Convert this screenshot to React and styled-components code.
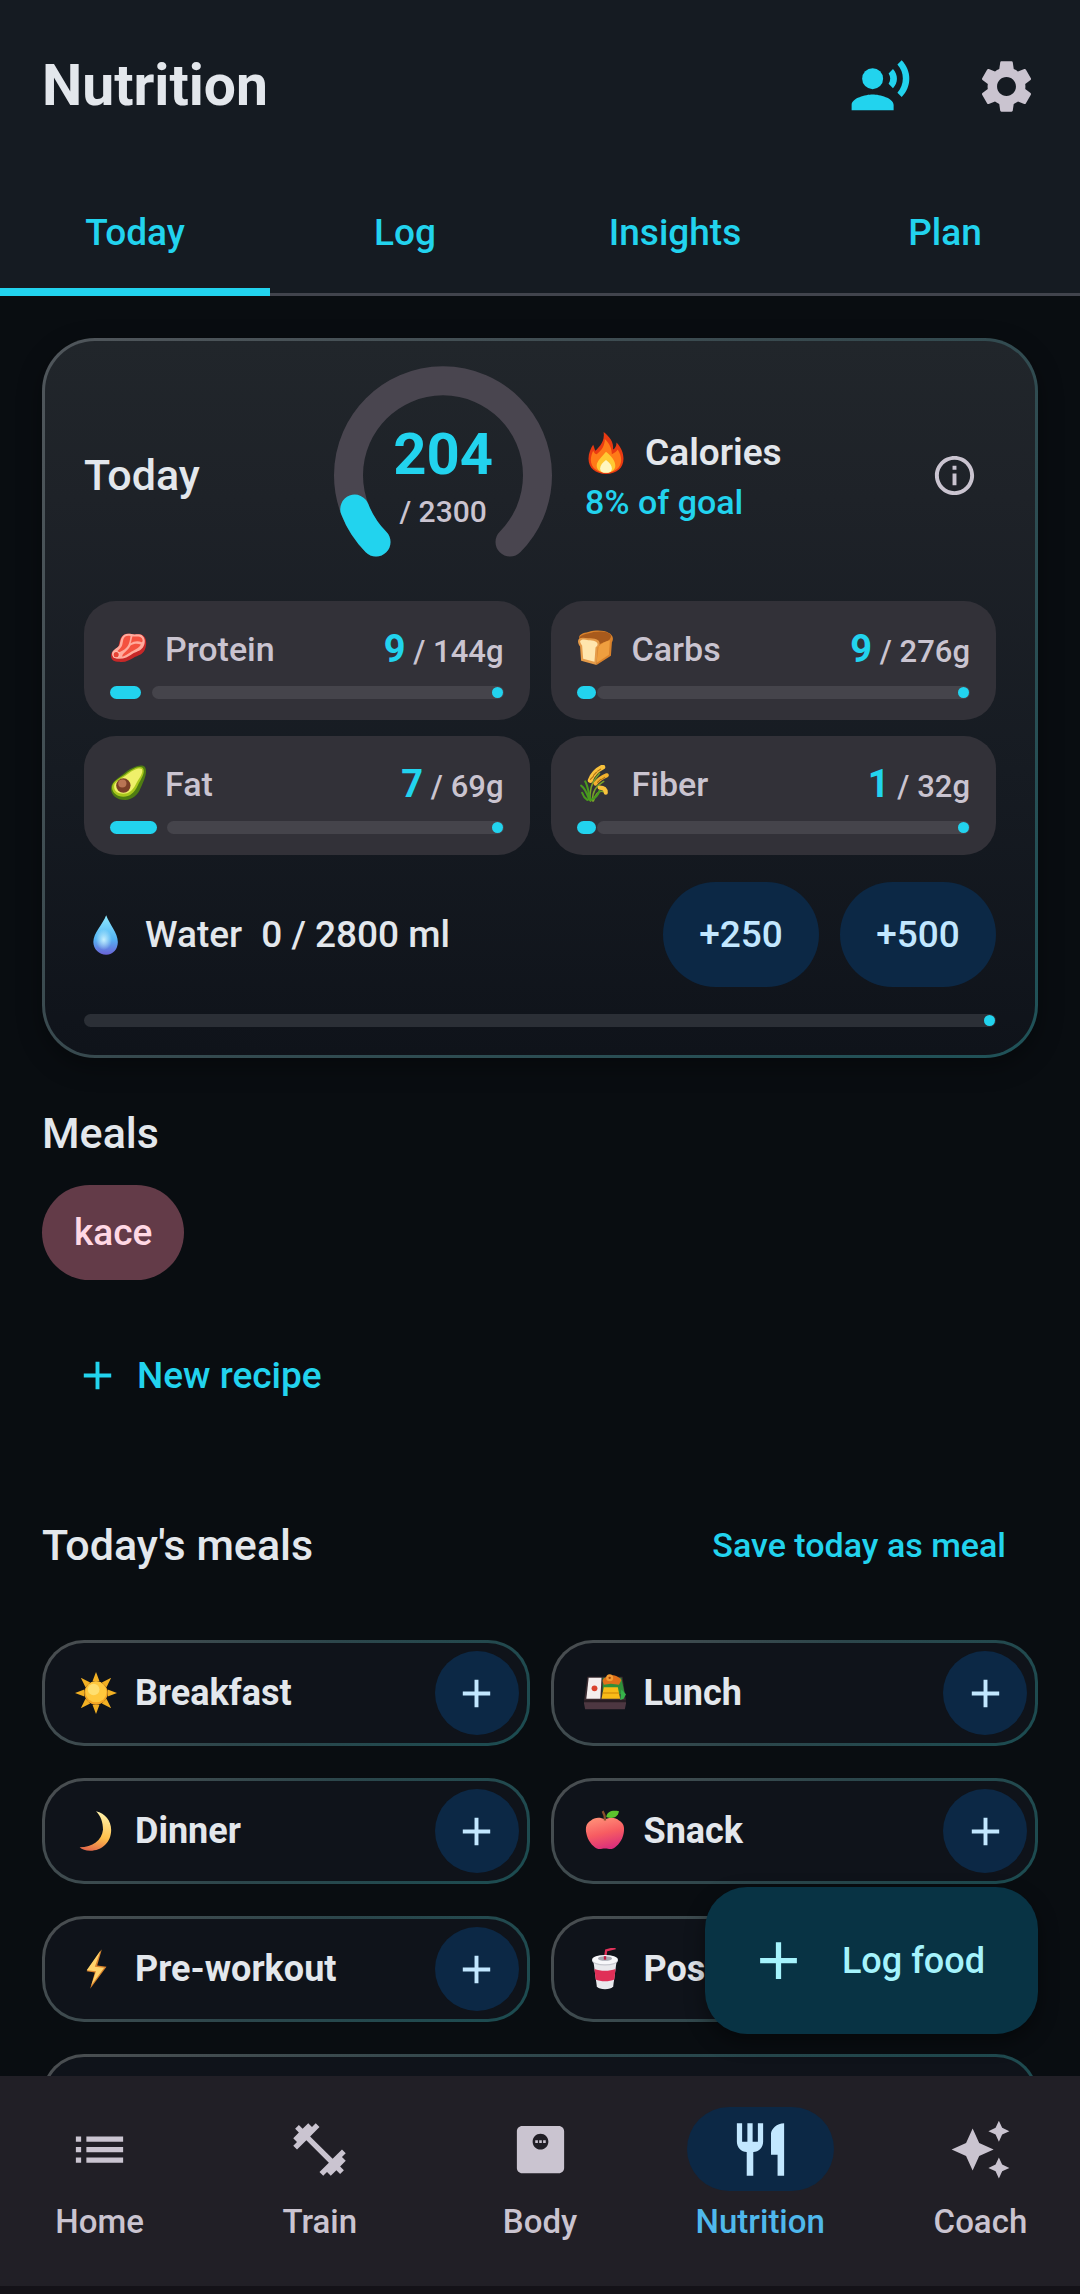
import React, { useState } from "react";
import styled, { createGlobalStyle } from "styled-components";
import {
  MdAdd,
  MdAutoAwesome,
  MdFitnessCenter,
  MdInfoOutline,
  MdList,
  MdMonitorWeight,
  MdRecordVoiceOver,
  MdRestaurant,
  MdSettings,
} from "react-icons/md";

const GlobalStyle = createGlobalStyle`
  * {
    box-sizing: border-box;
  }
  body {
    margin: 0;
    background-color: #090d11;
    color: #e3e7ec;
    font-family: Roboto, "Liberation Sans", sans-serif;
  }
  button {
    border: none;
    margin: 0;
    padding: 0;
    background: none;
    color: inherit;
    font: inherit;
    cursor: pointer;
  }
  svg {
    display: block;
    flex-shrink: 0;
  }
`;

const Screen = styled.div`
  height: 100vh;
  display: flex;
  flex-direction: column;
`;

/* top bar */

const Header = styled.header`
  flex-shrink: 0;
  background-color: #151b22;
`;

const TopBar = styled.div`
  height: 172px;
  padding: 0 11px 0 42px;
  display: flex;
  align-items: center;
`;

const Title = styled.h1`
  flex: 1;
  margin: 0;
  font-size: 57px;
  line-height: 74px;
  font-weight: bold;
`;

const IconButton = styled.button`
  width: ${(props) => props.$size || 126}px;
  height: ${(props) => props.$size || 126}px;
  display: flex;
  align-items: center;
  justify-content: center;
  color: ${(props) => props.$color || "#cac4d0"};
`;

const Tabs = styled.div`
  display: flex;
  height: 124px;
  box-shadow: inset 0 -3px #41444d;
`;

const Tab = styled.button`
  flex: 1;
  padding-bottom: 4px;
  color: #22d3ee;
  font-size: 37px;
  font-weight: 500;
  box-shadow: ${(props) => (props.$active ? "inset 0 -8px #22d3ee" : "none")};
`;

/* content */

const Body = styled.div`
  flex: 1;
  min-height: 0;
  position: relative;
`;

const Content = styled.main`
  height: 100%;
  padding: 42px;
  overflow-y: auto;
  scrollbar-width: none;
  display: flex;
  flex-direction: column;
  gap: 42px;
`;

const SummaryCard = styled.section`
  flex-shrink: 0;
  padding: 24px 39px 28px;
  display: flex;
  flex-direction: column;
  gap: 27px;
  border: 3px solid transparent;
  border-radius: 53px;
  background:
    linear-gradient(#21262b, #1e2228 22%, #161b22 60%, #0f131a) padding-box,
    linear-gradient(135deg, #50565b, #37494e 45%, #1f5258) border-box;
  box-shadow: 0 8px 24px rgba(0, 0, 0, 0.35);
`;

const SummaryTop = styled.div`
  display: grid;
  grid-template-columns: 9fr 220px 16fr;
  align-items: center;
  margin-bottom: -11px;
`;

const Heading = styled.h2`
  margin: 0;
  font-size: 43px;
  line-height: 66px;
  font-weight: 500;
`;

const Gauge = styled.div`
  display: grid;
  place-items: center;

  > * {
    grid-area: 1 / 1;
  }
`;

const GaugeText = styled.div`
  display: flex;
  flex-direction: column;
  align-items: center;
`;

const GaugeValue = styled.strong`
  color: #22d3ee;
  font-size: 58px;
  line-height: 74px;
`;

const GaugeGoal = styled.span`
  color: #cac4d0;
  font-size: 30px;
  line-height: 42px;
  font-weight: 500;
`;

const CaloriesSide = styled.div`
  padding-left: 32px;
  display: flex;
  align-items: center;
  justify-content: space-between;
`;

const CaloriesTitle = styled.div`
  display: flex;
  align-items: center;
  gap: 18px;
  font-size: 37px;
  line-height: 54px;
  font-weight: 600;
`;

const Percent = styled.div`
  color: #22d3ee;
  font-size: 34px;
  line-height: 44px;
  font-weight: 500;
`;

const Macros = styled.div`
  display: grid;
  grid-template-columns: 1fr 1fr;
  gap: 16px 21px;
`;

const MacroTile = styled.div`
  padding: 21px 26px;
  display: flex;
  flex-direction: column;
  gap: 11px;
  border-radius: 32px;
  background-color: #323138;
`;

const MacroRow = styled.div`
  height: 53px;
  display: flex;
  align-items: center;
  color: #cac4d0;
`;

const MacroName = styled.span`
  flex: 1;
  padding-left: 18px;
  font-size: 34px;
  font-weight: 500;
`;

const MacroValue = styled.span`
  font-size: 31px;
  font-weight: 500;

  strong {
    color: #22d3ee;
    font-size: 38px;
  }
`;

const Bar = styled.div`
  height: 13px;
  display: flex;
  gap: ${(props) => props.$gap}px;
`;

const BarFill = styled.div`
  border-radius: 7px;
  background-color: #22d3ee;
`;

const BarTrack = styled.div`
  flex: 1;
  padding: 1px;
  display: flex;
  justify-content: flex-end;
  border-radius: 7px;
  background-color: ${(props) => props.$color || "#45444b"};

  &::after {
    content: "";
    width: 11px;
    height: 11px;
    border-radius: 50%;
    background-color: #22d3ee;
  }
`;

const WaterRow = styled.div`
  display: flex;
  align-items: center;
  gap: 19px;
  font-size: 37px;
  font-weight: 500;
`;

const WaterAmount = styled.span`
  flex: 1;
`;

const WaterButtons = styled.div`
  display: flex;
  gap: 21px;
`;

const WaterButton = styled.button`
  width: 156px;
  height: 105px;
  border-radius: 53px;
  background-color: #0c2845;
  color: #c2e7ff;
`;

const Section = styled.section`
  flex-shrink: 0;
  display: flex;
  flex-direction: column;
  align-items: flex-start;
`;

const Chip = styled.button`
  height: 95px;
  margin: 19px 0 32px;
  padding: 0 32px;
  border-radius: 48px;
  background-color: #633b48;
  color: #ffd8e4;
  font-size: 37px;
  font-weight: 500;
`;

const TextButton = styled.button`
  height: 127px;
  padding: 0 32px;
  display: flex;
  align-items: center;
  gap: 16px;
  color: #22d3ee;
  font-size: ${(props) => (props.$small ? 34 : 37)}px;
  font-weight: 500;
`;

const SectionHead = styled.div`
  width: 100%;
  margin-bottom: 32px;
  display: flex;
  align-items: center;
  justify-content: space-between;
`;

const MealGrid = styled.div`
  width: 100%;
  display: grid;
  grid-template-columns: 1fr 1fr;
  gap: 32px 21px;
`;

const MealCard = styled.div`
  height: 106px;
  grid-column: ${(props) => (props.$wide ? "1 / -1" : "auto")};
  padding: 0 8px 0 30px;
  display: flex;
  align-items: center;
  gap: 18px;
  border: 3px solid transparent;
  border-radius: 42px;
  background:
    linear-gradient(#0f131a, #0f131a) padding-box,
    linear-gradient(135deg, #4b4e51, #2c464b 50%, #1b4c51) border-box;
`;

const MealName = styled.span`
  flex: 1;
  font-size: 36px;
  font-weight: bold;
`;

const AddButton = styled(IconButton)`
  border-radius: 50%;
  background-color: #0c2845;
`;

const LogFood = styled.button`
  position: absolute;
  right: 42px;
  bottom: 42px;
  height: 147px;
  padding: 0 53px 0 42px;
  display: flex;
  align-items: center;
  gap: 32px;
  border-radius: 42px;
  background-color: #083344;
  color: #a5f3fc;
  font-size: 36px;
  font-weight: 500;
  box-shadow: 0 8px 20px rgba(0, 0, 0, 0.4);
`;

/* bottom navigation */

const BottomNav = styled.nav`
  flex-shrink: 0;
  height: 218px;
  padding-top: 31px;
  display: flex;
  gap: 21px;
  background-color: #211f26;
  border-bottom: 8px solid #141218;
`;

const NavItem = styled.a`
  flex: 1;
  display: flex;
  flex-direction: column;
  align-items: center;
  gap: 10px;
  color: ${(props) => (props.$active ? "#4fb8ec" : "#cac4d0")};
  font-size: 33px;
  line-height: 42px;
  font-weight: 500;
  text-decoration: none;
`;

const NavIcon = styled.span`
  width: 147px;
  height: 84px;
  display: flex;
  align-items: center;
  justify-content: center;
  border-radius: 42px;
  background-color: ${(props) => (props.$active ? "#0c2845" : "transparent")};
  color: ${(props) => (props.$active ? "#c2e7ff" : "#cac4d0")};
`;

/* food drawings, all on a 36 unit grid */

const drawings = {
  fire: (
    <>
      <path d="M16 0c5 4 9 9 8 15 2-1 3-3 3-6 4 4 6 9 6 14 0 8-6 13-15 13S3 31 3 23c0-5 2-9 4-12 1 2 1 4 2 5 4-4 8-8 7-16z" fill="#e93a12" />
      <path d="M17 6c4 4 6 8 6 13 2-1 4-2 5-4 2 3 3 6 3 9 0 6-5 11-13 11S5 30 5 24c0-3 1-6 2-8 1 2 2 3 3 3 4-3 7-7 7-13z" fill="#ff7a18" />
      <path d="M18 17c5 4 8 8 8 12 0 4-4 6-8 6s-8-2-8-6c0-4 4-7 8-12z" fill="#ffc933" />
      <path d="M18 24c3 2 5 5 5 7 0 3-2 4-5 4s-5-1-5-4c0-2 2-5 5-7z" fill="#fff6bf" />
    </>
  ),
  protein: (
    <>
      <path d="M10 9c2-5 6-6 11-5 4 1 8-1 12 2 3 3 3 10 0 15-3 4-7 4-10 6-4 2-8 5-14 4-5 0-8-2-8-6 0-5 5-6 7-9 1-2 1-5 2-7z" fill="#c62828" />
      <path d="M11 8c2-4 5-5 10-4 4 1 8-1 11 2 3 3 2 8 0 11-3 4-7 4-10 6-4 3-8 5-13 5-4 0-7-2-7-5 0-4 5-5 7-8 1-2 1-5 2-7z" fill="#ffab9d" />
      <path d="M13 9c1-3 4-4 7-3-1 5-1 9-6 13-3 2-5 3-8 3 2-3 5-4 6-8zM22 6c3 1 6-1 9 2 1 2 1 3 0 4-4-2-8-1-11 1 1-2 1-5 2-7zM20 15c3-2 7-2 10-1-2 4-6 5-9 7-3 2-6 4-9 5-1-3 6-6 8-11z" fill="#f4513f" />
      <circle cx="6" cy="24" r="3" fill="#e84335" stroke="#ffc0b3" strokeWidth="1" />
    </>
  ),
  carbs: (
    <>
      <path d="M2 8c0-4 4-5 9-6 7-2 15-2 20 1 4 2 5 6 3 9l-1 13-14 9-1-19z" fill="#d9822b" />
      <path d="M2 8c2-4 8-4 14-6 7-1 13-1 16 2 2 2 1 4-1 6l-10 4z" fill="#a85a1c" />
      <path d="M21 16c3-3 7-5 11-6l-1 14-12 8z" fill="#ef9f3f" />
      <path d="M1 11c0-4 4-4 10-3 6 0 11 1 11 5 0 2-1 3-2 4l-1 17L4 30 3 16c-1-1-2-3-2-5z" fill="#e59b49" />
      <path d="M3 11c1-2 4-2 8-1 5 0 9 1 9 4 0 1-1 2-2 3l-1 14-11-3-1-13c-1-1-2-3-2-4z" fill="#ffe5ad" />
    </>
  ),
  fat: (
    <>
      <path d="M34 2c3 5-1 13-4 20-3 8-9 12-15 12C6 34 1 29 1 23c0-7 7-10 13-15C20 3 30-2 34 2z" fill="#4f7d12" />
      <path d="M32 3c3 4-2 11-5 17-3 7-8 11-14 11C7 31 2 27 2 22c0-6 7-9 13-13C21 4 29 0 32 3z" fill="#a9c81d" />
      <path d="M31 4c2 4-3 9-6 15-3 6-7 9-12 9S4 26 4 21c0-5 7-7 13-12 5-4 11-7 14-5z" fill="#eff06a" />
      <circle cx="13" cy="20" r="7" fill="#7a3f27" />
      <circle cx="12" cy="18" r="4" fill="#b97554" />
    </>
  ),
  fiber: (
    <>
      <g fill="none" strokeLinecap="round">
        <path d="M13 35C12 26 13 18 22 8M15 35c0-9 3-14 11-19M16 35c1-5 5-11 10-9" stroke="#7ba428" strokeWidth="1.5" />
        <path d="M12 34C10 28 7 22 4 20M13 34C11 25 10 19 8 16M14 34c4-2 7-6 8-9M10 34c-3-2-4-4-5-7" stroke="#48991e" strokeWidth="2" />
        <path d="M13 15C15 9 19 5 25 2" stroke="#f9c23c" strokeWidth="5" />
        <path d="M18 18c3-4 6-6 11-8" stroke="#f3b12e" strokeWidth="4" />
        <path d="M22 22c4 0 6 2 6 5" stroke="#f9c23c" strokeWidth="4" />
        <path d="M13 14l3-3M16 10l3-3M20 6l3-2M20 17l3-3M24 14l3-2" stroke="#ae6d12" strokeWidth="1" />
      </g>
    </>
  ),
  water: (
    <>
      <defs>
        <linearGradient id="drop" x1="0" y1="0" x2="0" y2="1">
          <stop offset="0" stopColor="#8eeaff" />
          <stop offset="0.6" stopColor="#55b4f3" />
          <stop offset="1" stopColor="#6a62d6" />
        </linearGradient>
        <radialGradient id="dropShine">
          <stop offset="0" stopColor="#d2f6ff" stopOpacity="0.9" />
          <stop offset="1" stopColor="#d2f6ff" stopOpacity="0" />
        </radialGradient>
      </defs>
      <path d="M19 1c3 8 10 15 10 23 0 6-4 11-10 11S8 30 8 24C8 16 16 9 19 1z" fill="url(#drop)" />
      <ellipse cx="17" cy="22" rx="7" ry="9" fill="url(#dropShine)" />
    </>
  ),
  breakfast: (
    <>
      <path d="M18 0l3 8h-6zM18 36l3-8h-6zM0 18l8-3v6zM36 18l-8-3v6zM5 5l8 4-4 4zM31 5l-4 8-4-4zM5 31l4-8 4 4zM31 31l-8-4 4-4z" fill="#f2b023" />
      <circle cx="18" cy="18" r="10" fill="#f5a623" />
      <circle cx="18" cy="17" r="9" fill="#ffc83d" />
      <circle cx="16" cy="15" r="5" fill="#ffdf70" />
    </>
  ),
  lunch: (
    <>
      <path d="M3 4h30l3 21H0z" fill="#3b2b31" />
      <path d="M4 5h11l-1 18H2z" fill="#f4eeee" />
      <circle cx="9" cy="14" r="2.5" fill="#d9432f" />
      <path d="M16 5h16l3 14H16z" fill="#2f8f3a" />
      <path d="M16 8c0-3 4-4 6-5 3-1 9 1 10 4l-2 4-7-1-6 1z" fill="#e0701a" />
      <circle cx="22" cy="5" r="3" fill="#f49b32" />
      <circle cx="22" cy="5" r="1" fill="#a8480e" />
      <path d="M17 13h12l2 10H15z" fill="#f9bb18" />
      <path d="M16 18h14" stroke="#d08b08" />
      <path d="M32 15l4 4-2 4-3 1z" fill="#36b24a" />
      <path d="M0 24h36v3l-1 5H1l-1-5z" fill="#4d3741" />
      <path d="M0 24h36v2H0z" fill="#281d23" />
    </>
  ),
  dinner: (
    <>
      <defs>
        <linearGradient id="moon" x1="0.5" y1="0" x2="0.3" y2="1">
          <stop offset="0" stopColor="#fff0a8" />
          <stop offset="0.6" stopColor="#ffc04a" />
          <stop offset="1" stopColor="#e2674a" />
        </linearGradient>
      </defs>
      <path d="M18 1c8 2 13 8 13 16 0 11-8 18-18 18-4 0-7-1-9-3 11 0 19-6 20-15 0-7-2-12-6-16z" fill="url(#moon)" />
    </>
  ),
  snack: (
    <>
      <defs>
        <linearGradient id="apple" x1="0.3" y1="0" x2="0.6" y2="1">
          <stop offset="0" stopColor="#ff8f77" />
          <stop offset="0.5" stopColor="#f75c62" />
          <stop offset="1" stopColor="#d92d7c" />
        </linearGradient>
      </defs>
      <path d="M18 8c4-2 9-2 12 1 4 2 5 6 4 11-1 6-5 11-9 13-3 1-4 0-7 0s-4 1-7 0c-4-2-8-7-9-13-1-5 0-9 4-11 3-3 8-3 12-1z" fill="url(#apple)" />
      <path d="M18 9c0-3 0-5-2-8" fill="none" stroke="#8b4f2c" strokeWidth="2" />
      <path d="M19 6c1-5 5-6 11-5-1 5-5 7-11 5z" fill="#5cc22d" />
    </>
  ),
  preWorkout: (
    <>
      <path d="M23 1L10 20l7 1-4 14 14-19-8-1z" fill="#d9822b" />
      <path d="M22 2L10 19l8 1-4 12 11-15-8-1z" fill="#ffd36b" />
    </>
  ),
  postWorkout: (
    <>
      <path d="M18 9l1-7 8-2" fill="none" stroke="#e0325a" strokeWidth="2" />
      <path d="M8 11h20l-3 22c-2 3-12 3-14 0z" fill="#e9e9ed" />
      <path d="M9 18c5 2 13 2 18 0l-1 9c-4 2-12 2-16 0z" fill="#e02f57" />
      <ellipse cx="18" cy="11" rx="11" ry="4" fill="#c6c7ce" />
      <ellipse cx="18" cy="10" rx="11" ry="4" fill="#f7f7fa" />
      <ellipse cx="18" cy="9" rx="6" ry="2" fill="#a6a8b1" />
      <path d="M18 10V7" stroke="#c21e45" strokeWidth="2" />
    </>
  ),
};

const Drawing = ({ name, size = 42 }) => (
  <svg width={size} height={size} viewBox="0 0 36 36" aria-hidden="true">
    {drawings[name]}
  </svg>
);

const macros = [
  { key: "protein", name: "Protein", value: 9, goal: 144, fill: 8, gap: 11 },
  { key: "carbs", name: "Carbs", value: 9, goal: 276, fill: 5, gap: 1 },
  { key: "fat", name: "Fat", value: 7, goal: 69, fill: 12, gap: 10 },
  { key: "fiber", name: "Fiber", value: 1, goal: 32, fill: 5, gap: 1 },
];

const meals = [
  { key: "breakfast", name: "Breakfast" },
  { key: "lunch", name: "Lunch" },
  { key: "dinner", name: "Dinner" },
  { key: "snack", name: "Snack" },
  { key: "preWorkout", name: "Pre-workout" },
  { key: "postWorkout", name: "Post-workout" },
];

const navItems = [
  { name: "Home", icon: MdList },
  { name: "Train", icon: MdFitnessCenter },
  { name: "Body", icon: MdMonitorWeight },
  { name: "Nutrition", icon: MdRestaurant },
  { name: "Coach", icon: MdAutoAwesome },
];

const GAUGE_ARC = "M43 177A94.5 94.5 0 1 1 177 177";

const CalorieGauge = ({ value, goal }) => (
  <Gauge>
    <svg width="220" height="220" viewBox="0 0 220 220" aria-hidden="true">
      <g fill="none" strokeWidth="29" strokeLinecap="round">
        <path d={GAUGE_ARC} stroke="#49454f" />
        <path
          d={GAUGE_ARC}
          stroke="#22d3ee"
          pathLength="100"
          strokeDasharray={`${(value / goal) * 100} 200`}
        />
      </g>
    </svg>
    <GaugeText>
      <GaugeValue>{value}</GaugeValue>
      <GaugeGoal>/ {goal}</GaugeGoal>
    </GaugeText>
  </Gauge>
);

const Macro = ({ macro }) => (
  <MacroTile>
    <MacroRow>
      <Drawing name={macro.key} size={37} />
      <MacroName>{macro.name}</MacroName>
      <MacroValue>
        <strong>{macro.value}</strong> / {macro.goal}g
      </MacroValue>
    </MacroRow>
    <Bar
      $gap={macro.gap}
      role="progressbar"
      aria-label={macro.name}
      aria-valuenow={macro.value}
      aria-valuemax={macro.goal}
    >
      <BarFill style={{ width: `${macro.fill}%` }} />
      <BarTrack />
    </Bar>
  </MacroTile>
);

const App = () => {
  const [tab, setTab] = useState("Today");

  return (
    <Screen>
      <GlobalStyle />
      <Header>
        <TopBar>
          <Title>Nutrition</Title>
          <IconButton $color="#22d3ee" aria-label="Voice">
            <MdRecordVoiceOver size={63} />
          </IconButton>
          <IconButton aria-label="Settings">
            <MdSettings size={63} />
          </IconButton>
        </TopBar>
        <Tabs role="tablist">
          {["Today", "Log", "Insights", "Plan"].map((name) => (
            <Tab
              key={name}
              role="tab"
              aria-selected={tab === name}
              $active={tab === name}
              onClick={() => setTab(name)}
            >
              {name}
            </Tab>
          ))}
        </Tabs>
      </Header>

      <Body>
        <Content>
          <SummaryCard>
            <SummaryTop>
              <Heading>Today</Heading>
              <CalorieGauge value={204} goal={2300} />
              <CaloriesSide>
                <div>
                  <CaloriesTitle>
                    <Drawing name="fire" />
                    Calories
                  </CaloriesTitle>
                  <Percent>8% of goal</Percent>
                </div>
                <IconButton $size={84} aria-label="About calories">
                  <MdInfoOutline size={47} />
                </IconButton>
              </CaloriesSide>
            </SummaryTop>
            <Macros>
              {macros.map((macro) => (
                <Macro key={macro.key} macro={macro} />
              ))}
            </Macros>
            <WaterRow>
              <Drawing name="water" />
              <span>Water</span>
              <WaterAmount>0 / 2800 ml</WaterAmount>
              <WaterButtons>
                <WaterButton>+250</WaterButton>
                <WaterButton>+500</WaterButton>
              </WaterButtons>
            </WaterRow>
            <Bar
              $gap={0}
              role="progressbar"
              aria-label="Water"
              aria-valuenow={0}
              aria-valuemax={2800}
            >
              <BarTrack $color="#2b2f36" />
            </Bar>
          </SummaryCard>

          <Section>
            <Heading>Meals</Heading>
            <Chip>kace</Chip>
            <TextButton>
              <MdAdd size={47} />
              New recipe
            </TextButton>
          </Section>

          <Section>
            <SectionHead>
              <Heading>Today's meals</Heading>
              <TextButton $small>Save today as meal</TextButton>
            </SectionHead>
            <MealGrid>
              {meals.map((meal) => (
                <MealCard key={meal.key}>
                  <Drawing name={meal.key} />
                  <MealName>{meal.name}</MealName>
                  <AddButton
                    $size={84}
                    $color="#c2e7ff"
                    aria-label={`Add ${meal.name}`}
                  >
                    <MdAdd size={47} />
                  </AddButton>
                </MealCard>
              ))}
              <MealCard $wide />
            </MealGrid>
          </Section>
        </Content>

        <LogFood>
          <MdAdd size={63} />
          Log food
        </LogFood>
      </Body>

      <BottomNav>
        {navItems.map(({ name, icon: Icon }) => (
          <NavItem key={name} href="#" $active={name === "Nutrition"}>
            <NavIcon $active={name === "Nutrition"}>
              <Icon size={63} />
            </NavIcon>
            {name}
          </NavItem>
        ))}
      </BottomNav>
    </Screen>
  );
};

export default App;
